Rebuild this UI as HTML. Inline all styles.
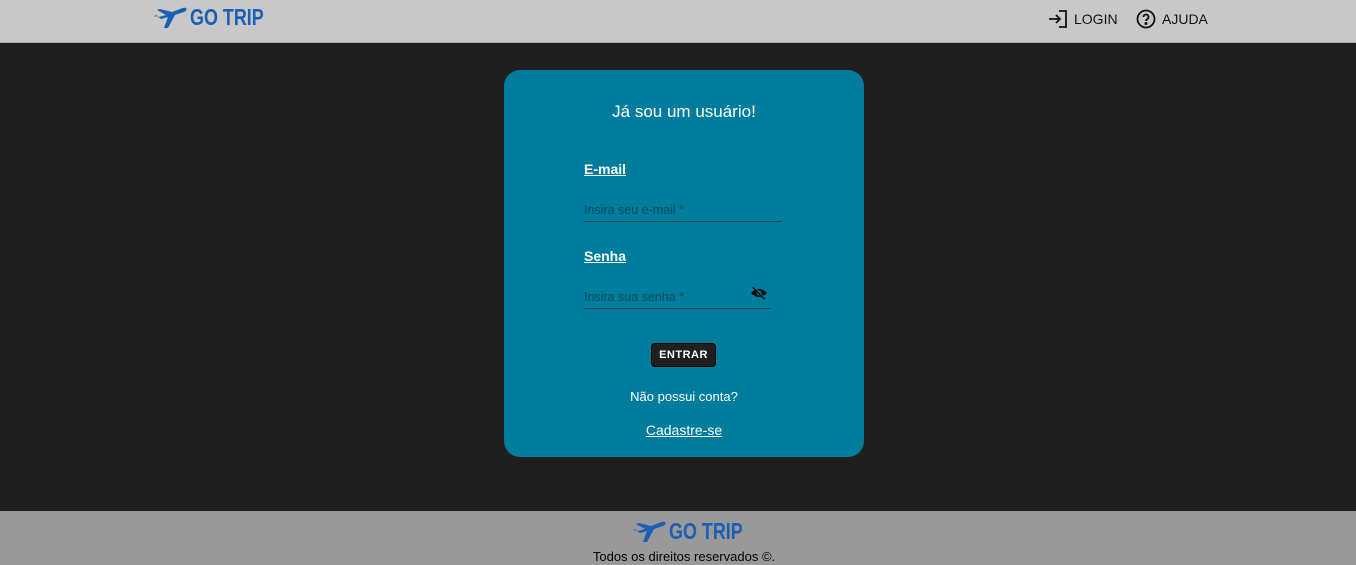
<!DOCTYPE html>
<html><head><meta charset="utf-8"><style>
*{margin:0;padding:0;box-sizing:border-box}
body{width:1356px;height:565px;overflow:hidden;background:#1f1f1f;font-family:"Liberation Sans",sans-serif;position:relative}
.hdr{position:absolute;left:0;top:0;width:1356px;height:43px;background:#c8c8c8;border-bottom:1px solid #aaa}
.logo{position:absolute;display:flex;align-items:center;gap:2px}
.logo span{display:inline-block;font-family:"Liberation Sans Narrow","Liberation Sans",sans-serif;font-weight:bold;color:#1a5fb4;font-size:23px;transform:scaleX(.78);transform-origin:left}
.nav{position:absolute;top:9px;font-size:14px;color:#111;display:flex;align-items:center;gap:6px}
.card{position:absolute;left:504px;top:70px;width:360px;height:387px;background:#007c9c;border-radius:16px;color:#fff}
.lbl{position:absolute;left:80px;font-size:14px;font-weight:bold;text-decoration:underline}
.in{position:absolute;left:80px;font-size:12.5px;color:#0d4a5c;border-bottom:1px solid #0d4a5c;height:19px}
.btn{position:absolute;left:147px;top:273px;width:65px;height:24px;background:#1f1f1f;border:1px solid #000;border-radius:4px;font-size:11px;font-weight:bold;text-align:center;line-height:22px;letter-spacing:.5px}
.ftr{position:absolute;left:0;top:511px;width:1356px;height:54px;background:#999}
</style></head><body>
<div class="hdr">
 <div class="logo" style="left:154px;top:4px">
  <svg width="34" height="22" viewBox="0 0 34 22"><path d="M0 10 L3 9 L7 12 L14 10 L10 21 L14 21 L21 8 L30 5 Q34 3 32 1 Q30 0 26 2 L18 5 L6 2 L3 3 L12 8 L5 10 L2 8 Z" fill="#1a5fb4"/></svg>
  <span>GO TRIP</span></div>
 <div class="nav" style="left:1048px">
  <svg width="20" height="20" viewBox="0 0 20 20" fill="none" stroke="#111" stroke-width="1.8"><path d="M1 10h11M8 6l4 4-4 4M11 2h7v16h-7"/></svg>LOGIN</div>
 <div class="nav" style="left:1136px">
  <svg width="20" height="20" viewBox="0 0 20 20" fill="none" stroke="#111" stroke-width="1.8"><circle cx="10" cy="10" r="8.5"/><path d="M7.5 8a2.5 2.5 0 1 1 3.5 2.3c-.7.4-1 .8-1 1.7"/><circle cx="10" cy="14.5" r=".6" fill="#111"/></svg>AJUDA</div>
</div>
<div class="card">
 <div style="position:absolute;top:32px;width:100%;text-align:center;font-size:17px">Já sou um usuário!</div>
 <div class="lbl" style="top:91px">E-mail</div>
 <div class="in" style="top:133px;width:198px">Insira seu e-mail *</div>
 <div class="lbl" style="top:178px">Senha</div>
 <div class="in" style="top:220px;width:187px">Insira sua senha *</div>
 <svg style="position:absolute;left:246px;top:215px" width="18" height="16" viewBox="0 0 18 16"><path d="M1 8Q9 0 17 8Q9 16 1 8Z" fill="#000"/><circle cx="9" cy="8" r="2.5" fill="#007c9c"/><path d="M3 2L15 14" stroke="#000" stroke-width="2"/><path d="M3 1L15 13" stroke="#007c9c" stroke-width="1"/></svg>
 <div class="btn">ENTRAR</div>
 <div style="position:absolute;top:319px;width:100%;text-align:center;font-size:13px">Não possui conta?</div>
 <div style="position:absolute;top:352px;width:100%;text-align:center;font-size:14px;text-decoration:underline">Cadastre-se</div>
</div>
<div class="ftr">
 <div class="logo" style="left:633px;top:7px">
  <svg width="34" height="22" viewBox="0 0 34 22"><path d="M0 10 L3 9 L7 12 L14 10 L10 21 L14 21 L21 8 L30 5 Q34 3 32 1 Q30 0 26 2 L18 5 L6 2 L3 3 L12 8 L5 10 L2 8 Z" fill="#1a5fb4"/></svg>
  <span>GO TRIP</span></div>
 <div style="position:absolute;top:38px;width:100%;text-align:center;font-size:13px;color:#000;padding-left:12px">Todos os direitos reservados ©.</div>
</div>
</body></html>
